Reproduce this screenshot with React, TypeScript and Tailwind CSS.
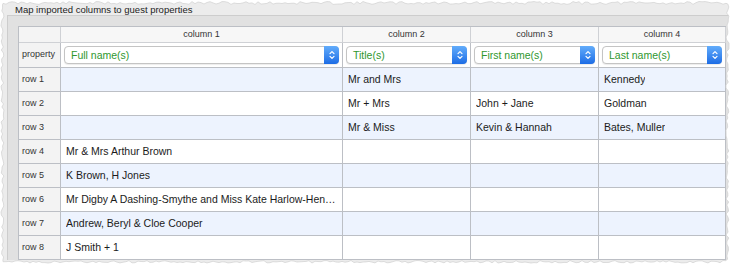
import React from 'react';

type Row = { label: string; cells: string[] };

const rows: Row[] = [
  { label: 'row 1', cells: ['', 'Mr and Mrs', '', 'Kennedy'] },
  { label: 'row 2', cells: ['', 'Mr + Mrs', 'John + Jane', 'Goldman'] },
  { label: 'row 3', cells: ['', 'Mr & Miss', 'Kevin & Hannah', 'Bates, Muller'] },
  { label: 'row 4', cells: ['Mr & Mrs Arthur Brown', '', '', ''] },
  { label: 'row 5', cells: ['K Brown, H Jones', '', '', ''] },
  { label: 'row 6', cells: ['Mr Digby A Dashing-Smythe and Miss Kate Harlow-Henley', '', '', ''] },
  { label: 'row 7', cells: ['Andrew, Beryl & Cloe Cooper', '', '', ''] },
  { label: 'row 8', cells: ['J Smith + 1', '', '', ''] },
];

const properties = ['Full name(s)', 'Title(s)', 'First name(s)', 'Last name(s)'];

// torn paper edge round the screenshot
function tornEdge() {
  let s = 11;
  const r = () => {
    s = (s * 9301 + 49297) % 233280;
    return s / 233280;
  };
  const pts: string[] = [];
  for (let x = 3; x <= 726; x += 3) pts.push(`${x},${(1.5 + r() * 3).toFixed(1)}`);
  for (let y = 4; y <= 260; y += 3) pts.push(`${(726 + r() * 3).toFixed(1)},${y}`);
  for (let x = 726; x >= 3; x -= 3) pts.push(`${x},${(260.5 + r() * 2.5).toFixed(1)}`);
  for (let y = 260; y >= 4; y -= 3) pts.push(`${(1 + r() * 3).toFixed(1)},${y}`);
  return 'M' + pts.join(' L') + ' Z';
}

const edge = tornEdge();

function Chevrons() {
  return (
    <svg width="8" height="12" viewBox="0 0 8 12" fill="none" stroke="white" strokeWidth="1.2" strokeLinecap="round" strokeLinejoin="round">
      <path d="M2 4.6 L4 2.6 L6 4.6" />
      <path d="M2 7.4 L4 9.4 L6 7.4" />
    </svg>
  );
}

function Popup({ label }: { label: string }) {
  return (
    <div className="flex h-[18px] w-full items-stretch rounded-[4px] border border-[#c4c4c4] bg-white shadow-[0_1px_1px_rgba(0,0,0,0.08)]">
      <span className="flex-1 truncate pl-[6px] text-[10.5px] leading-[16px] text-[#2e972e]">{label}</span>
      <span className="-my-px -mr-px flex w-[15px] items-center justify-center rounded-r-[4px] bg-gradient-to-b from-[#62acfb] to-[#1c6ce5]">
        <Chevrons />
      </span>
    </div>
  );
}

export default function App() {
  return (
    <div className="relative h-[264px] w-[730px] overflow-hidden bg-[#ececec] font-['Liberation_Sans',Arial,sans-serif] text-[#1b1b1b]">
      <div className="h-[15px] pl-[15px] pt-[4px] text-[9.5px] leading-[11px] text-[#222]">
        Map imported columns to guest properties
      </div>
      <div className="ml-[7px] border-l border-t border-[#cdcdcd] bg-[#e1e1e1] pl-[10px] pt-[10px]">
        <div className="grid w-[708px] grid-cols-[42px_282px_128px_128px_127px] border-l border-t border-[#bcbfc5]">
          {/* header row */}
          <div className="h-[16px] border-b border-r border-[#cfd1d5] bg-[#f4f4f4]" />
          {[1, 2, 3, 4].map((n) => (
            <div key={n} className="flex h-[16px] items-center justify-center border-b border-r border-[#cfd1d5] bg-[#f7f7f7] text-[9px] text-[#333]">
              column {n}
            </div>
          ))}

          {/* property row */}
          <div className="flex h-[25px] items-center border-b border-r border-[#bcbfc5] bg-[#f3f3f3] pl-[3px] text-[9px] text-[#333]">
            property
          </div>
          {properties.map((p) => (
            <div key={p} className="flex h-[25px] items-center border-b border-r border-[#bcbfc5] bg-white px-[3px]">
              <Popup label={p} />
            </div>
          ))}

          {rows.map((row, i) => {
            const bg = i % 2 === 0 ? 'bg-[#edf3fe]' : 'bg-white';
            return (
              <React.Fragment key={row.label}>
                <div className="flex h-[24px] items-center border-b border-r border-[#bcbfc5] bg-[#f3f3f3] pl-[3px] text-[9px] text-[#333]">
                  {row.label}
                </div>
                {row.cells.map((c, j) => (
                  <div key={j} className={`flex h-[24px] min-w-0 items-center border-b border-r border-[#bcbfc5] px-[5px] text-[10.5px] ${bg}`}>
                    <span className="truncate">{c}</span>
                  </div>
                ))}
              </React.Fragment>
            );
          })}
        </div>
      </div>

      <svg className="pointer-events-none absolute inset-0" width="730" height="264" viewBox="0 0 730 264">
        <path d={`M0 0 H730 V264 H0 Z ${edge}`} fill="white" fillRule="evenodd" />
        <path d={edge} fill="none" stroke="#d4d4d4" strokeWidth="0.8" />
      </svg>
    </div>
  );
}
